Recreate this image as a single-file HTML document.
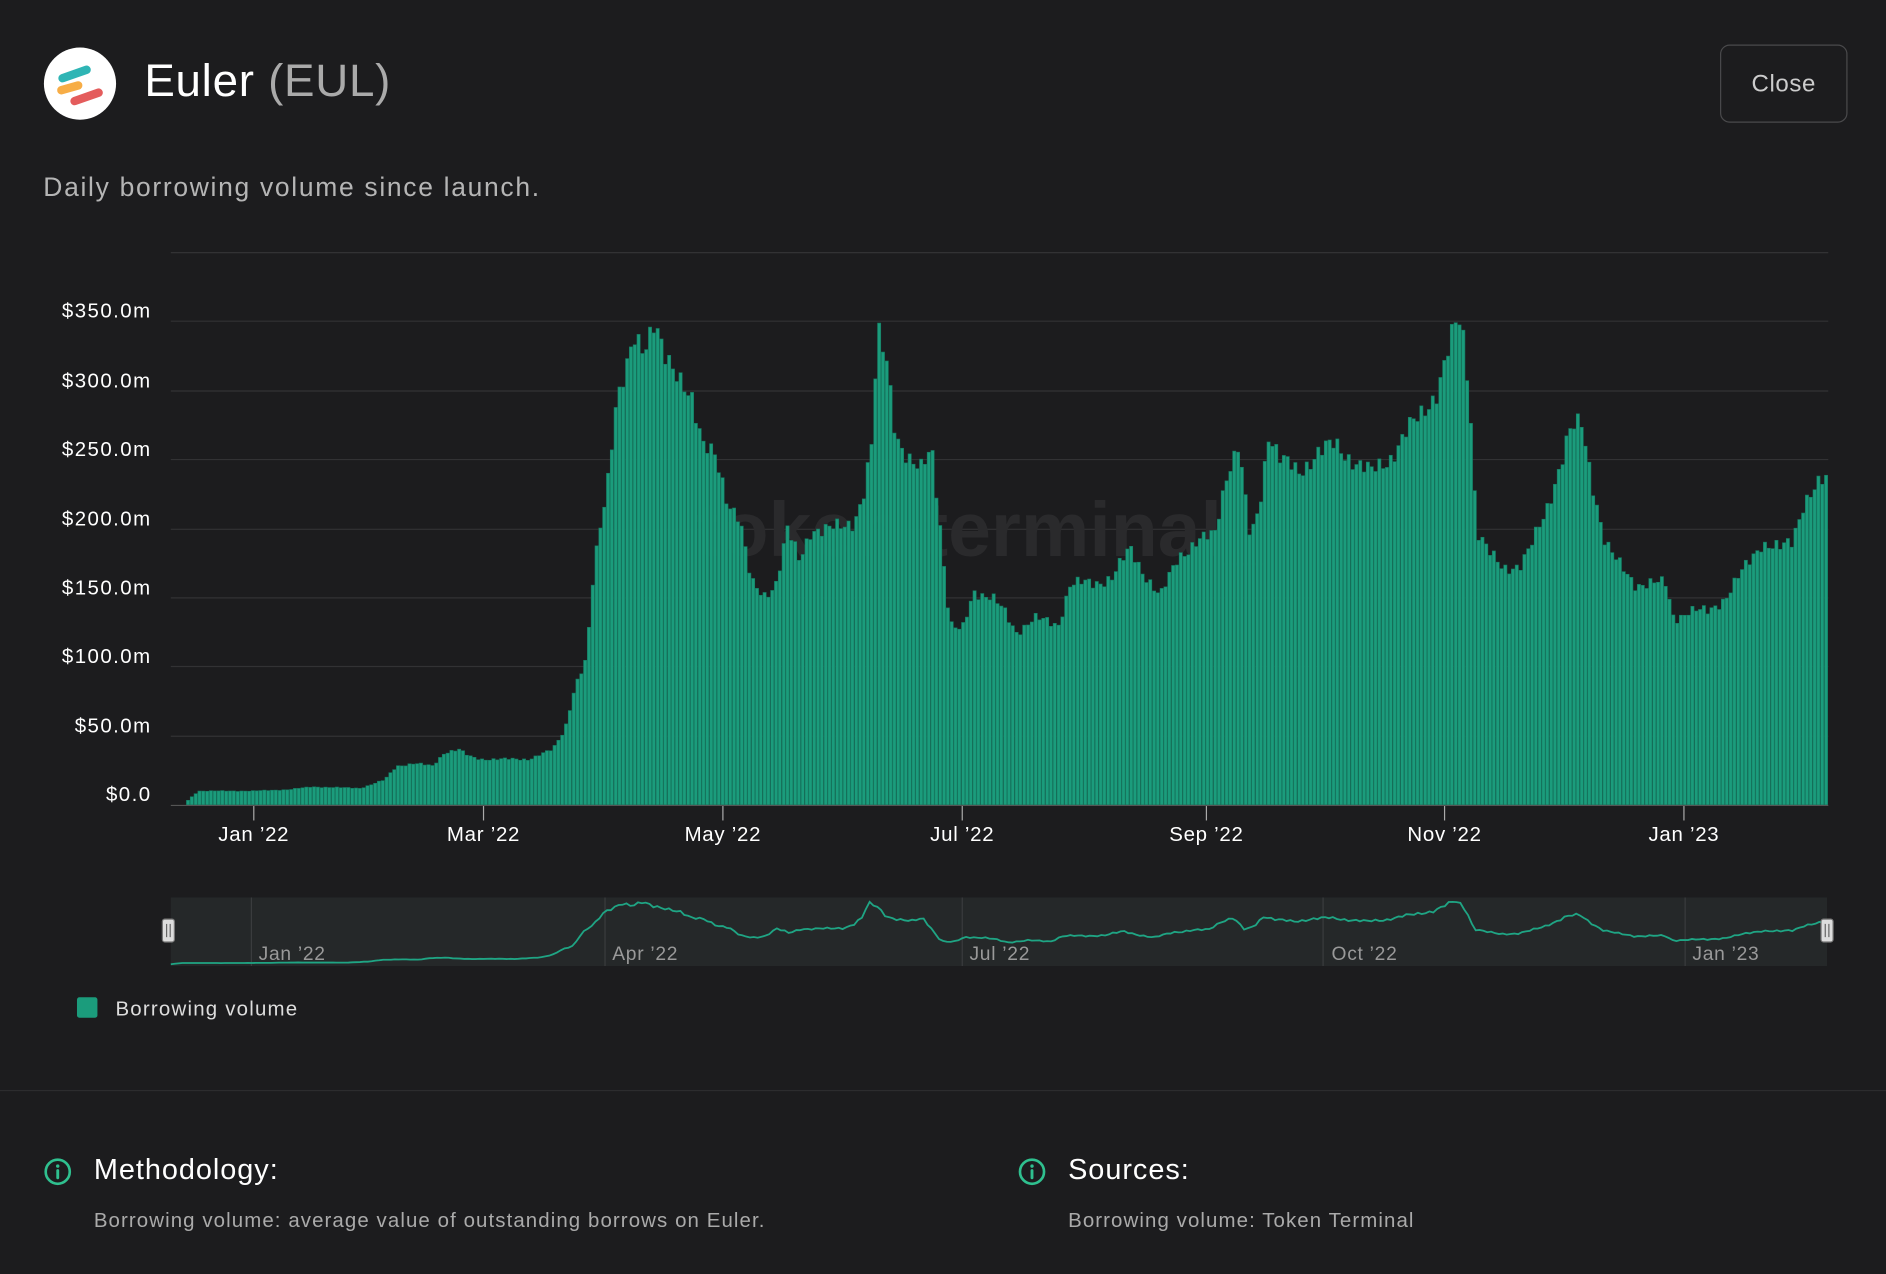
<!DOCTYPE html>
<html><head><meta charset="utf-8"><style>
html,body{margin:0;padding:0;background:#1c1c1e;overflow:hidden;width:1886px;height:1274px}
#w{position:absolute;left:0;top:0;width:1568px;height:1059px;transform:scale(1.20281,1.20302);transform-origin:0 0;font-family:"Liberation Sans",sans-serif;color:#fff}
.a{position:absolute;white-space:nowrap}
</style></head><body><div id="w">
<svg class="a" style="left:36px;top:39px" width="61" height="61" viewBox="0 0 61 61">
<circle cx="30.5" cy="30.5" r="30" fill="#fff"/>
<line x1="16" y1="26" x2="36" y2="19" stroke="#2fb5b5" stroke-width="7" stroke-linecap="round"/>
<line x1="15" y1="36" x2="29" y2="32" stroke="#f7ad46" stroke-width="7" stroke-linecap="round"/>
<line x1="26" y1="45" x2="46" y2="38" stroke="#e45c5c" stroke-width="7" stroke-linecap="round"/>
</svg>
<div class="a" style="left:120px;top:47px;font-size:38px;letter-spacing:0.6px">Euler <span style="color:#aaa">(EUL)</span></div>
<div class="a" style="left:1430px;top:37px;width:106px;height:65px;border:1px solid #4a4a4c;border-radius:8px;box-sizing:border-box;text-align:center;line-height:64px;font-size:20px;color:#ccc;letter-spacing:0.5px">Close</div>
<div class="a" style="left:36px;top:143px;font-size:22px;color:#b5b5b5;letter-spacing:1.4px">Daily borrowing volume since launch.</div>
<svg class="a" id="ch" style="left:0;top:0" width="1568" height="900"></svg>
<div class="a" style="left:64px;top:829px;width:17px;height:17px;background:#1b9c7c;border-radius:2px"></div>
<div class="a" style="left:96px;top:829px;font-size:17px;color:#ddd;letter-spacing:1px">Borrowing volume</div>
<div class="a" style="left:0;top:906px;width:1568px;height:1px;background:#2c2c2e"></div>
<svg class="a" style="left:36px;top:962px" width="24" height="24" viewBox="0 0 24 24"><circle cx="12" cy="12" r="10" fill="none" stroke="#2fc08f" stroke-width="2.2"/><line x1="12" y1="11" x2="12" y2="17" stroke="#2fc08f" stroke-width="2.4" stroke-linecap="round"/><circle cx="12" cy="7.3" r="1.4" fill="#2fc08f"/></svg>
<div class="a" style="left:78px;top:959px;font-size:24px;letter-spacing:0.8px">Methodology:</div>
<div class="a" style="left:78px;top:1005px;font-size:17px;color:#aaa;letter-spacing:0.9px">Borrowing volume: average value of outstanding borrows on Euler.</div>
<svg class="a" style="left:846px;top:962px" width="24" height="24" viewBox="0 0 24 24"><circle cx="12" cy="12" r="10" fill="none" stroke="#2fc08f" stroke-width="2.2"/><line x1="12" y1="11" x2="12" y2="17" stroke="#2fc08f" stroke-width="2.4" stroke-linecap="round"/><circle cx="12" cy="7.3" r="1.4" fill="#2fc08f"/></svg>
<div class="a" style="left:888px;top:959px;font-size:24px;letter-spacing:0.8px">Sources:</div>
<div class="a" style="left:888px;top:1005px;font-size:17px;color:#aaa;letter-spacing:0.9px">Borrowing volume: Token Terminal</div>
</div>
<script>
var K=[155,2,165,10,210,10,240,11,260,13,300,12,320,18,330,28,345,30,360,28,370,38,382,40,390,35,400,33,420,33,440,33,460,40,470,55,478,85,488,105,494,170,500,205,506,240,512,290,520,310,528,335,535,330,545,355,552,325,560,310,575,300,585,260,595,250,605,220,615,210,625,160,635,150,645,160,655,200,665,175,675,200,690,200,700,200,710,205,718,225,725,260,730,340,738,320,745,270,755,250,765,240,775,260,780,220,790,130,800,125,810,155,825,150,835,140,845,125,860,135,880,130,890,160,900,160,910,160,925,165,940,185,950,170,965,150,980,180,995,190,1010,195,1020,240,1030,260,1040,190,1048,220,1055,270,1065,250,1080,240,1095,255,1110,260,1125,250,1140,240,1155,250,1170,270,1180,280,1195,300,1210,345,1215,350,1222,300,1228,200,1240,180,1250,170,1265,175,1275,190,1285,210,1295,240,1305,270,1315,275,1325,230,1335,190,1345,175,1360,160,1375,160,1385,160,1392,135,1405,140,1420,140,1435,150,1450,170,1465,190,1480,185,1490,190,1500,220,1510,230,1520,235];
function val(x){for(var i=0;i<K.length-2;i+=2){if(x<=K[i+2]){var t=(x-K[i])/(K[i+2]-K[i]);return K[i+1]+t*(K[i+3]-K[i+1]);}}return K[K.length-1];}
var s='',N=430,x0=155,x1=1520,pw=(x1-x0)/N,base=669,sc=402/350;
var gl=[210,267,325,382,440,497,554,612];
gl.forEach(function(y){s+='<line x1="142" y1="'+y+'" x2="1520" y2="'+y+'" stroke="#323234" stroke-width="1"/>';});
var yl=['$350.0m','$300.0m','$250.0m','$200.0m','$150.0m','$100.0m','$50.0m','$0.0'];
[261,319,376,434,491,548,606,663].forEach(function(y,i){s+='<text x="126" y="'+(y+3)+'" text-anchor="end" font-size="17" letter-spacing="1.2" fill="#fff" font-family="Liberation Sans">'+yl[i]+'</text>';});
s+='<text x="815" y="462" text-anchor="middle" font-size="64" font-weight="bold" fill="#2a2a2c" font-family="Liberation Sans">token terminal_</text>';
var pts=[];
for(var i=0;i<N;i++){var x=x0+i*pw;var v=val(x+pw/2)*(1+0.02*Math.sin(i*2.3)+0.015*Math.sin(i*5.7));var h=v*sc;
s+='<rect x="'+x.toFixed(2)+'" y="'+(base-h).toFixed(2)+'" width="'+(pw-0.5).toFixed(2)+'" height="'+h.toFixed(2)+'" fill="#1b9c7c" stroke="#157a61" stroke-width="0.5"/>';pts.push(v);}
s+='<line x1="142" y1="669.5" x2="1520" y2="669.5" stroke="#555" stroke-width="1"/>';
var tk=[[211,'Jan ’22'],[402,'Mar ’22'],[601,'May ’22'],[800,'Jul ’22'],[1003,'Sep ’22'],[1201,'Nov ’22'],[1400,'Jan ’23']];
tk.forEach(function(t){s+='<line x1="'+t[0]+'" y1="670" x2="'+t[0]+'" y2="682" stroke="#aaa"/><text x="'+t[0]+'" y="699" text-anchor="middle" font-size="17" letter-spacing="0.6" fill="#fff" font-family="Liberation Sans">'+t[1]+'</text>';});
s+='<rect x="142" y="746" width="1377" height="57" fill="#252829"/>';
[209,503,800,1100,1401].forEach(function(x){s+='<line x1="'+x+'" y1="746" x2="'+x+'" y2="803" stroke="#3a3c3e"/>';});
[[215,'Jan ’22'],[509,'Apr ’22'],[806,'Jul ’22'],[1107,'Oct ’22'],[1407,'Jan ’23']].forEach(function(t){s+='<text x="'+t[0]+'" y="798" font-size="16" letter-spacing="0.6" fill="#999" font-family="Liberation Sans">'+t[1]+'</text>';});
var d='';for(var i=0;i<N;i++){var x=142+i*(1377/(N-1));var y=802-pts[i]*(54/360);d+=(i?'L':'M')+x.toFixed(1)+' '+y.toFixed(1);}
s+='<path d="'+d+'" fill="none" stroke="#1fa584" stroke-width="1.5"/>';
[140,1519].forEach(function(x){s+='<rect x="'+(x-5)+'" y="764" width="10" height="19" rx="2" fill="#ddd" stroke="#777"/><line x1="'+(x-1.5)+'" y1="768" x2="'+(x-1.5)+'" y2="779" stroke="#666"/><line x1="'+(x+1.5)+'" y1="768" x2="'+(x+1.5)+'" y2="779" stroke="#666"/>';});
document.getElementById('ch').innerHTML=s;
</script>
</body></html>
